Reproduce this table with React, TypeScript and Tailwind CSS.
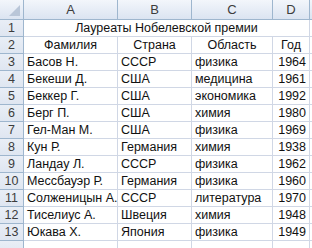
import React from 'react';

const rows: [string, string, string, number][] = [
  ['Басов Н.', 'СССР', 'физика', 1964],
  ['Бекеши Д.', 'США', 'медицина', 1961],
  ['Беккер Г.', 'США', 'экономика', 1992],
  ['Берг П.', 'США', 'химия', 1980],
  ['Гел-Ман М.', 'США', 'физика', 1969],
  ['Кун Р.', 'Германия', 'химия', 1938],
  ['Ландау Л.', 'СССР', 'физика', 1962],
  ['Мессбауэр Р.', 'Германия', 'физика', 1960],
  ['Солженицын А.', 'СССР', 'литература', 1970],
  ['Тиселиус А.', 'Швеция', 'химия', 1948],
  ['Юкава Х.', 'Япония', 'физика', 1949],
];

const grid = 'grid grid-cols-[24px_94px_74px_81px_37px_1fr]';
const cell = 'h-[17px] border-r border-b border-[#d0d7e5] bg-white px-[3px] leading-[16px] whitespace-nowrap overflow-hidden';
const rowHead = 'h-[17px] border-r border-b border-[#9eb6ce] bg-gradient-to-b from-[#e9eef6] to-[#dfe6f1] text-center leading-[16px] text-[#3c3c3c]';
const colHead = 'h-[20px] border-r border-b border-[#9eb6ce] bg-gradient-to-b from-[#f3f6fb] to-[#dbe4f1] text-center leading-[19px] text-[#3c3c3c] text-[13px]';

export default function App() {
  return (
    <div className="w-[312px] h-[248px] overflow-hidden bg-white text-[12.5px] text-[#111]" style={{ fontFamily: '"Liberation Sans", Arial, sans-serif' }}>
      <div className={grid}>
        <div className="h-[20px] border-r border-b border-[#9eb6ce] bg-gradient-to-b from-[#f3f6fb] to-[#dbe4f1] relative">
          <svg className="absolute right-[3px] bottom-[3px]" width="11" height="11" viewBox="0 0 11 11">
            <polygon points="11,0 11,11 0,11" fill="#b9c6d8" />
          </svg>
        </div>
        {['A', 'B', 'C', 'D', ''].map((l, i) => (
          <div key={i} className={colHead}>{l}</div>
        ))}

        <div className={rowHead}>1</div>
        <div className={`${cell} col-span-4 text-center`}>Лауреаты Нобелевской премии</div>
        <div className={cell}></div>

        <div className={rowHead}>2</div>
        <div className={`${cell} text-center`}>Фамилия</div>
        <div className={`${cell} text-center`}>Страна</div>
        <div className={`${cell} text-center`}>Область</div>
        <div className={`${cell} text-center`}>Год</div>
        <div className={cell}></div>

        {rows.map((r, i) => (
          <React.Fragment key={i}>
            <div className={rowHead}>{i + 3}</div>
            <div className={cell}>{r[0]}</div>
            <div className={cell}>{r[1]}</div>
            <div className={cell}>{r[2]}</div>
            <div className={`${cell} text-right`}>{r[3]}</div>
            <div className={cell}></div>
          </React.Fragment>
        ))}

        <div className={rowHead}></div>
        <div className={cell}></div>
        <div className={cell}></div>
        <div className={cell}></div>
        <div className={cell}></div>
        <div className={cell}></div>
      </div>
    </div>
  );
}
